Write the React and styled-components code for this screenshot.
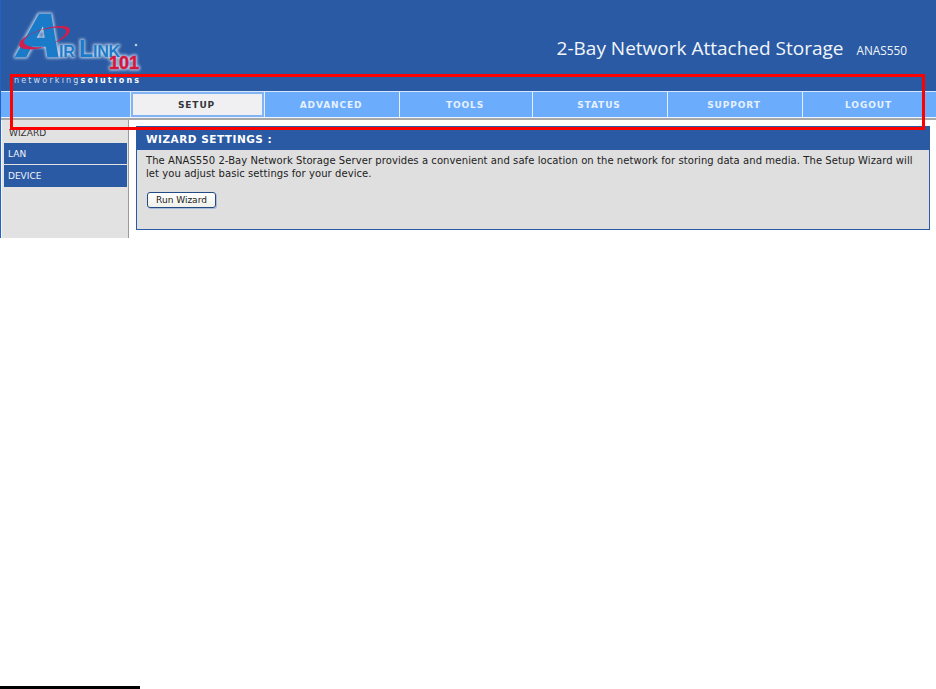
import React from "react";
import styled, { createGlobalStyle } from "styled-components";

const Global = createGlobalStyle`
  html, body { margin: 0; padding: 0; background: #fff; }
  body { width: 936px; height: 689px; overflow: hidden; font-family: "DejaVu Sans", sans-serif; }
`;
const Page = styled.div`
  position: relative;
  width: 936px;
  height: 689px;
  display: flex;
  flex-direction: column;
  background: #fff;
`;
const Shell = styled.div`
  flex: none;
  height: 238px;
  box-sizing: border-box;
  border-left: 1px solid #1f62c8;
  display: flex;
  flex-direction: column;
`;
const Header = styled.header`
  height: 91px;
  flex: none;
  background: #2a5aa3;
  display: flex;
  align-items: flex-start;
  justify-content: space-between;
  box-sizing: border-box;
  padding-right: 29px;
`;
const LogoSvg = styled.svg`
  display: block;
  flex: none;
`;
const Product = styled.div`
  display: flex;
  align-items: baseline;
  gap: 13px;
  margin-top: 35px;
  color: #f2f6fb;
  white-space: nowrap;
  font-family: "Open Sans", sans-serif;
`;
const ProductName = styled.span`
  font-size: 19px;
`;
const ProductModel = styled.span`
  font-size: 11.8px;
`;
const Nav = styled.nav`
  height: 27px;
  flex: none;
  box-sizing: border-box;
  background: #6cacfc;
  border-top: 1px solid #d7e7fd;
  border-bottom: 1px solid #eef4fd;
  display: grid;
  grid-template-columns: 130px 134px 135px 133px 135px 135px 1fr;
`;
const NavCell = styled.div`
  box-sizing: border-box;
  border-right: 1px solid #e4effe;
  padding-right: 2px;
  display: flex;
  align-items: center;
  justify-content: center;
  font-size: 9px;
  font-weight: 700;
  letter-spacing: 0.9px;
  color: #e6f1ff;
  &:last-child { border-right: 0; }
  ${(p) =>
    p.$active &&
    `
    background: #f0f0f2;
    color: #33363d;
    box-shadow: inset 0 0 0 2px #82b4f4;
  `}
`;
const Shade = styled.div`
  height: 2px;
  flex: none;
  background: #a8a8a8;
`;
const Body = styled.main`
  flex: 1;
  min-height: 0;
  display: flex;
`;
const Sidebar = styled.aside`
  width: 128px;
  flex: none;
  box-sizing: border-box;
  background: #e2e2e2;
  border-left: 1px solid #f4f4f4;
  border-right: 1px solid #9a9a9a;
  display: flex;
  flex-direction: column;
  gap: 1px;
  padding: 0 1px 0 2px;
`;
const SideHeading = styled.div`
  height: 22px;
  box-sizing: border-box;
  padding: 8px 0 0 5px;
  font-size: 9px;
  line-height: 11px;
  color: #333;
`;
const SideItem = styled.div`
  height: ${(p) => p.$h}px;
  box-sizing: border-box;
  display: flex;
  align-items: center;
  padding-left: 4px;
  font-size: 9px;
  color: #f0f4fb;
  background: #2a5aa3;
`;
const Content = styled.section`
  flex: 1;
  min-width: 0;
  padding: 6px 6px 0 7px;
  background: #fff;
  box-sizing: border-box;
`;
const Panel = styled.div`
  height: 104px;
  box-sizing: border-box;
  border: 1px solid #2a5aa3;
  background: #dfdfdf;
  display: flex;
  flex-direction: column;
`;
const PanelTitle = styled.h2`
  margin: 0;
  height: 23px;
  flex: none;
  background: #2a5aa3;
  color: #fff;
  font-size: 10.5px;
  font-weight: 700;
  letter-spacing: 0.5px;
  display: flex;
  align-items: center;
  padding-left: 9px;
`;
const PanelBody = styled.div`
  padding: 4px 9px 0 9px;
  font-size: 10px;
  line-height: 13px;
  letter-spacing: 0.07px;
  color: #222;
`;
const PanelText = styled.p`
  margin: 0;
  width: 772px;
`;
const WizardButton = styled.button`
  display: block;
  margin: 12px 0 0 1px;
  width: 69px;
  height: 16px;
  padding: 0;
  border: 1px solid #234a82;
  border-radius: 3px;
  background: linear-gradient(#ffffff, #f1f1ea);
  box-shadow: 1px 1px 0 #a8bcd8;
  color: #222;
  font-family: inherit;
  font-size: 9px;
`;
const Highlight = styled.div`
  position: absolute;
  left: 10px;
  top: 74px;
  width: 915px;
  height: 56px;
  box-sizing: border-box;
  border: 3px solid #ff0000;
  pointer-events: none;
`;
const FootRule = styled.div`
  width: 140px;
  height: 3px;
  background: #000;
  margin-top: auto;
`;

const sans = "Liberation Sans, sans-serif";

function LogoMark({ blue, red }) {
  return (
    <>
      <text x="18" y="56" fill={blue} stroke={blue} strokeWidth="2.6" fontFamily={sans} fontWeight="700" fontStyle="italic" fontSize="60">A</text>
      <text x="59" y="57" fill={blue} fontFamily={sans} fontWeight="700" fontSize="16" letterSpacing="-0.2">IR</text>
      <text x="79" y="57" fill={blue} fontFamily={sans} fontWeight="700" fontSize="23">L</text>
      <text x="93" y="57" fill={blue} fontFamily={sans} fontWeight="700" fontSize="16" letterSpacing="-0.3">INK</text>
      <text x="109" y="69" fill={red} stroke={red} strokeWidth="0.5" fontFamily={sans} fontWeight="700" fontSize="18">101</text>
    </>
  );
}

function Logo() {
  return (
    <LogoSvg width="145" height="91" viewBox="1 0 145 91" role="img" aria-label="AirLink 101 networking solutions">
      <defs>
        <filter id="glow" x="-15%" y="-20%" width="130%" height="140%">
          <feMorphology in="SourceAlpha" operator="dilate" radius="1" />
          <feGaussianBlur stdDeviation="1.6" result="b" />
          <feFlood floodColor="#dfeaf8" floodOpacity="0.85" />
          <feComposite in2="b" operator="in" />
        </filter>
      </defs>
      <g filter="url(#glow)">
        <LogoMark blue="#fff" red="#fff" />
      </g>
      <LogoMark blue="#1a7bc8" red="#d3173f" />
      <path
        d="M20 42 C24 36 40 28 58 26 C66 25.5 70 27 70 30 C70 35 62 40 54 43 C62 38 67 34 66 30.5 C65 27.5 56 27 46 29 C34 31.5 24 37 24 42 C24 46 32 48 44 47 C36 50 20 51 19 45 Z"
        fill="#cf1f4e"
      />
      <circle cx="136" cy="45" r="1.3" fill="#b8cbe6" />
      <text x="14" y="83" fontFamily="DejaVu Sans, sans-serif" fontSize="8" fill="#cfdcf0" textLength="125" lengthAdjust="spacing">
        networking<tspan fontWeight="700" fill="#f4f7fc">solutions</tspan>
      </text>
    </LogoSvg>
  );
}

const tabs = ["SETUP", "ADVANCED", "TOOLS", "STATUS", "SUPPORT", "LOGOUT"];

export default function App() {
  return (
    <Page>
      <Global />
      <Shell>
        <Header>
          <Logo />
          <Product>
            <ProductName>2-Bay Network Attached Storage</ProductName>
            <ProductModel>ANAS550</ProductModel>
          </Product>
        </Header>
        <Nav>
          <NavCell />
          {tabs.map((t) => (
            <NavCell key={t} $active={t === "SETUP"}>
              {t}
            </NavCell>
          ))}
        </Nav>
        <Shade />
        <Body>
          <Sidebar>
            <SideHeading>WIZARD</SideHeading>
            <SideItem $h={21}>LAN</SideItem>
            <SideItem $h={22}>DEVICE</SideItem>
          </Sidebar>
          <Content>
            <Panel>
              <PanelTitle>WIZARD SETTINGS :</PanelTitle>
              <PanelBody>
                <PanelText>
                  The ANAS550 2-Bay Network Storage Server provides a convenient and safe location on the network for storing data and media. The Setup Wizard will let you adjust basic settings for your device.
                </PanelText>
                <WizardButton>Run Wizard</WizardButton>
              </PanelBody>
            </Panel>
          </Content>
        </Body>
      </Shell>
      <FootRule />
      <Highlight />
    </Page>
  );
}
